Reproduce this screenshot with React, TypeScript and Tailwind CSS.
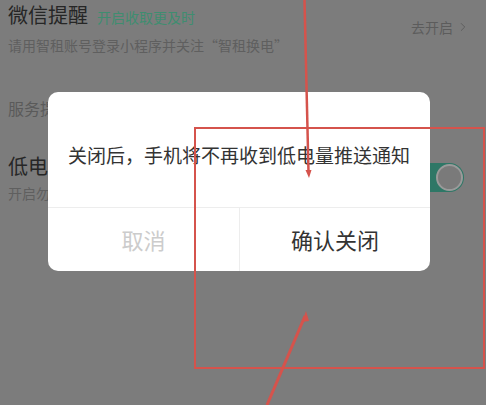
import { ChevronRight } from 'lucide-react';

const font = { fontFamily: '"Noto Sans CJK SC", "Noto Sans", sans-serif' };

const SettingsPage = () => (
  <div className="w-full h-full bg-[#7c7c7c] px-2">
    {/* 微信提醒 */}
    <div className="flex items-start justify-between">
      <div>
        <div className="flex items-baseline gap-[9px] pt-[1px]">
          <span className="text-[20px] leading-[28px] text-[#262626]">微信提醒</span>
          <span className="text-[14px] leading-[20px] text-[#3f8d70]">开启收取更及时</span>
        </div>
        <div className="text-[14px] leading-[20px] text-[#5f5f5f] mt-[6px]">
          请用智租账号登录小程序并关注“智租换电”
        </div>
      </div>
      <div className="flex items-center text-[14px] leading-[20px] text-[#5c5c5c] mt-[17px] mr-[8px]">
        <span>去开启</span>
        <ChevronRight className="w-[14px] h-[14px] ml-[3px]" strokeWidth={1.6} />
      </div>
    </div>

    {/* 服务提醒 */}
    <div className="text-[16px] leading-[22px] text-[#5a5a5a] mt-[42px]">服务提醒</div>

    {/* 低电量提醒 */}
    <div className="flex items-center justify-between mt-[33px]">
      <div>
        <div className="text-[20px] leading-[28px] text-[#262626]">低电量提醒</div>
        <div className="text-[14px] leading-[20px] text-[#5f5f5f] mt-[3px]">开启勿扰</div>
      </div>
      <div className="w-[56px] h-[29px] rounded-full bg-[#2e7766] flex items-center justify-end pr-[1px] mr-[14px]">
        <div className="w-[27px] h-[27px] rounded-full bg-[#7a7a7a] border-2 border-[#9a9a9a]" />
      </div>
    </div>
  </div>
);

const ConfirmDialog = () => (
  <div className="absolute inset-0 pl-[48px] pt-[92px]">
    <div className="w-[382px] bg-white rounded-[10px] overflow-hidden">
      <div className="h-[115px] flex items-center justify-center pt-[12px] text-[19px] text-[#333333]">
        关闭后，手机将不再收到低电量推送通知
      </div>
      <div className="flex h-[64px] border-t border-[#ededed]">
        <div className="w-[191px] flex items-center justify-center text-[22px] text-[#cccccc]">取消</div>
        <div className="flex-1 flex items-center justify-center text-[22px] text-[#333333] border-l border-[#ededed]">
          确认关闭
        </div>
      </div>
    </div>
  </div>
);

const Annotations = () => (
  <svg className="absolute inset-0 pointer-events-none" width="486" height="405" viewBox="0 0 486 405">
    <rect x="195" y="128" width="289" height="240" fill="none" stroke="#d5534c" strokeWidth="2" />
    <line x1="304.5" y1="0" x2="308.5" y2="172" stroke="#d5534c" strokeWidth="2.5" />
    <polygon points="305.5,170 311.5,170 309,178" fill="#d5534c" />
    <line x1="305" y1="316" x2="267" y2="405" stroke="#d5534c" strokeWidth="3" />
    <polygon points="306,311 302,322 309,321" fill="#d5534c" />
  </svg>
);

export default function App() {
  return (
    <div className="relative w-[486px] h-[405px] overflow-hidden" style={font}>
      <SettingsPage />
      <ConfirmDialog />
      <Annotations />
    </div>
  );
}
